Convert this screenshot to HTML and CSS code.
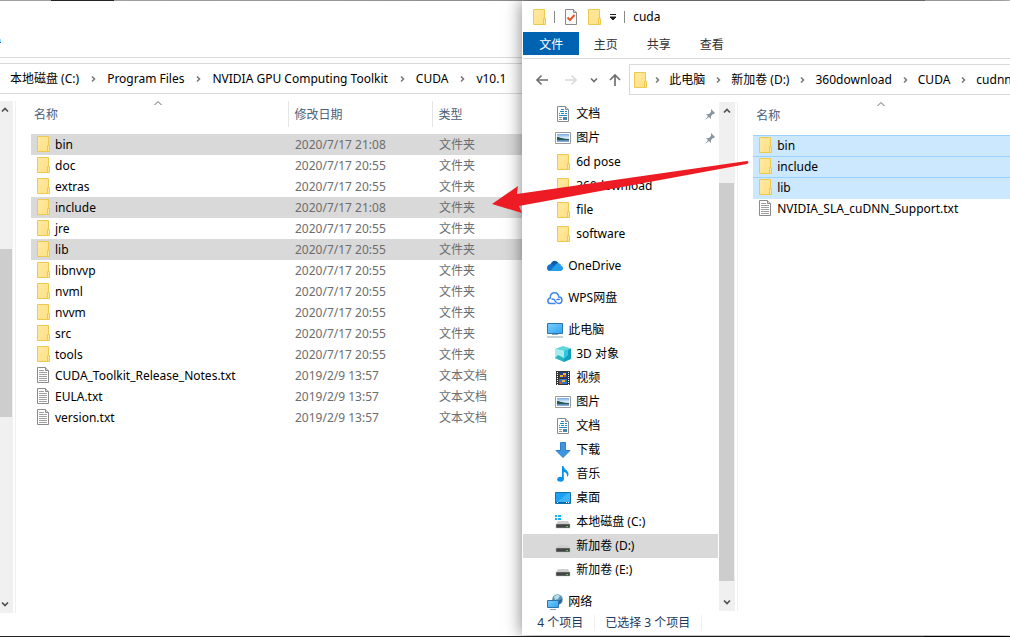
FILE: index.html
```html
<!DOCTYPE html>
<html lang="zh-CN">
<head>
    <meta charset="UTF-8">
    <meta name="viewport" content="width=device-width, initial-scale=1.0">
    <title>cuda</title>
    <link rel="stylesheet" href="styles.css">
</head>
<body>
    <!-- Icônes partagées -->
    <svg class="defs" aria-hidden="true">
        <defs>
            <linearGradient id="gFolder" x1="0" y1="0" x2="1" y2="1">
                <stop offset="0" stop-color="#ffe9a2"/>
                <stop offset="1" stop-color="#ffe084"/>
            </linearGradient>
            <linearGradient id="gScreen" x1="0" y1="0" x2="1" y2="1">
                <stop offset="0" stop-color="#7ccfff"/>
                <stop offset="1" stop-color="#2ea3f2"/>
            </linearGradient>
            <linearGradient id="gPhoto" x1="0" y1="0" x2="0" y2="1">
                <stop offset="0" stop-color="#6fa8e8"/>
                <stop offset="0.5" stop-color="#e4f2fc"/>
                <stop offset="0.8" stop-color="#5b8fc0"/>
                <stop offset="1" stop-color="#8fb8dc"/>
            </linearGradient>
            <symbol id="i-folder" viewBox="0 0 16 16">
                <path d="M2.500.5h11v15h-11z" fill="url(#gFolder)" stroke="#eec94f"/>
                <path d="M12.500 9.500h2v6h-2z" fill="#ffe79b" stroke="#eec94f"/>
            </symbol>
            <symbol id="i-text" viewBox="0 0 16 16">
                <path d="M2.500.5h8l3 3v12h-11z" fill="#fff" stroke="#8a8a8a"/>
                <path d="M10.500.5v3h3" fill="#ddd" stroke="#8a8a8a"/>
                <path d="M4 3.500h5M4 5.500h8M4 7.500h8M4 9.500h8M4 11.500h8M4 13.500h8" stroke="#a0a0a0"/>
            </symbol>
            <symbol id="i-doc" viewBox="0 0 16 16">
                <path d="M2.500.5h8l3 3v12h-11z" fill="#fff" stroke="#8a8a8a"/>
                <path d="M10.500.5v3h3" fill="#ddd" stroke="#8a8a8a"/>
                <path d="M6 3.500h3M5 5.500h4M10 5.500h2M4 7.500h1M6 7.500h3M10 7.500h2M4 9.500h8" stroke="#1e88d2"/>
                <path d="M4 11.500h3M4 13.500h3" stroke="#909090"/>
                <path d="M8 11h4v3H8z" fill="#4c84a6"/>
            </symbol>
            <symbol id="i-pic" viewBox="0 0 16 16">
                <path d="M.5 2.500h15v11H.5z" fill="#fff" stroke="#9a9a9a"/>
                <path d="M2 4h12v8H2z" fill="url(#gPhoto)"/>
                <path d="M2 7c3 0 5 2 12 2v1H2z" fill="#27554f"/>
            </symbol>
            <symbol id="i-onedrive" viewBox="0 0 16 16">
                <path d="M3.500 7C4 3 9 .5 11.600 5.500L8 10z" fill="#0a5cad"/>
                <path d="M0 10C0 7 4 5 6.500 6.800L10 10l-7 3C1 13 0 12 0 10z" fill="#1072cc"/>
                <path d="M8 7.500c1-3 6-3 6 .2 3 .6 2.500 5.300-.5 5.300H3z" fill="#259eea"/>
            </symbol>
            <symbol id="i-wps" viewBox="0 0 16 16">
                <path d="M3.500 13.500C0 13.500 0 8.500 3.300 8 3 1.500 11 1 11.800 7c4.300.2 4.200 6.500-.3 6.500-2.500 0-3-2-4-3.500-.800-1.200-2-1.200-3-.5M8.500 13.500h-5M9.500 10c1-1 2.500-.8 3 .2" fill="none" stroke="#3f86ef" stroke-width="1.500"/>
            </symbol>
            <symbol id="i-pc" viewBox="0 0 16 16">
                <path d="M.5 1.500h15v10H.5z" fill="url(#gScreen)" stroke="#2c75a8"/>
                <path d="M5 12.500h6M0 15h16" stroke="#8fa3b1"/>
            </symbol>
            <symbol id="i-cube" viewBox="0 0 16 16">
                <path d="M0 3l8-3 8 2.500L9 5z" fill="#5fd6de"/>
                <path d="M0 3l9 2v11l-9-4z" fill="#a4ecee"/>
                <path d="M9 5l7-2.500V13l-7 3z" fill="#0f9fc0"/>
                <path d="M9 5l4-1.500V9l-4 4z" fill="#35c4dc"/>
                <path d="M0 12l3-3 6 3v4z" fill="#2bb3c4"/>
            </symbol>
            <symbol id="i-video" viewBox="0 0 16 16">
                <path d="M1 1h14v14H1z" fill="#333"/>
                <path d="M4 2h8v6H4z" fill="#263f8c"/>
                <path d="M4 9h8v5H4z" fill="#3272d0"/>
                <path d="M5 5h3v2H5zM8 3h3v2H8zM7 10h3v2H7z" fill="#f2ba24"/>
                <path d="M9 5h2v2H9zM5 12h2v2H5z" fill="#d8532c"/>
                <path d="M2.500 2v13M13.500 2v13" stroke="#fff" stroke-dasharray="1 1"/>
            </symbol>
            <symbol id="i-down" viewBox="0 0 16 16">
                <path d="M5.500.5h5v8h4.500L8 15.500 1 8.500h4.500z" fill="#3c96e4" stroke="#2d7fc9"/>
            </symbol>
            <symbol id="i-music" viewBox="0 0 16 16">
                <ellipse cx="5.500" cy="13.200" rx="3.300" ry="2.500" fill="#0a93ec"/>
                <path d="M7 0h1.500c.5 3.500 5 4.500 5 8 0 1.500-1 2.500-1.500 3 .5-3-1-4.500-3.200-5.200V13H7z" fill="#0a93ec"/>
            </symbol>
            <symbol id="i-desk" viewBox="0 0 16 16">
                <path d="M.5 2.500h15v11H.5z" fill="#1ba1f4" stroke="#1272ae"/>
                <path d="M1 13L13 3h2v10z" fill="#40b4fb"/>
                <path d="M1 12.500h1M3 12.500h8M12 12.500h1M14 12.500h1" stroke="#0b68ad"/>
                <path d="M2 12.500h1M11 12.500h1M13 12.500h1" stroke="#fff"/>
            </symbol>
            <symbol id="i-drive" viewBox="0 0 16 16">
                <path d="M3 7h10l2 4H1z" fill="#d0d0d0"/>
                <path d="M1 10h14v4H1z" fill="#444" stroke="#bbb" stroke-width="0.500"/>
                <path d="M11 12h2v1h-2z" fill="#35e03d"/>
            </symbol>
            <symbol id="i-sys" viewBox="0 0 16 16">
                <use href="#i-drive"/>
                <path d="M0 1h2v2H0zM3 1h3v2H3zM0 4h2v2H0zM3 4h3v2H3z" fill="#18b0ee"/>
            </symbol>
            <symbol id="i-net" viewBox="0 0 16 16">
                <circle cx="10.500" cy="5.500" r="5.300" fill="#5b93b4"/>
                <path d="M7 3c2-3 5-2 6-1l-2 3-3 1z" fill="#b9dcea"/>
                <path d="M11 7l4-2c0 3-1 4-3 5z" fill="#2e6286"/>
                <path d="M.5 6.500h11v7H.5z" fill="url(#gScreen)" stroke="#2c75a8"/>
                <path d="M3 15.500h6" stroke="#8fa3b1"/>
            </symbol>
            <symbol id="i-pin" viewBox="0 0 16 16">
                <path d="M9 3l4 4-1 1h-1l-2 2v3l-2-2-4 3 3-4-2-2h3l2-2V4z" fill="#8795a1"/>
            </symbol>
            <symbol id="i-check" viewBox="0 0 16 16">
                <path d="M2.500.5h8l3 3v12h-11z" fill="#fafafa" stroke="#8a8a8a"/>
                <path d="M10.500.5v3h3" fill="#ddd" stroke="#8a8a8a"/>
                <path d="M4.500 8.500l2.500 2.500 4.500-5" fill="none" stroke="#e4572a" stroke-width="2"/>
            </symbol>
            <symbol id="i-left" viewBox="0 0 16 16">
                <path d="M14 8H3M7.500 3.500L3 8l4.500 4.500" fill="none" stroke="currentColor" stroke-width="1.700"/>
            </symbol>
            <symbol id="i-right" viewBox="0 0 16 16">
                <path d="M2 8h11M8.500 3.500L13 8l-4.500 4.500" fill="none" stroke="currentColor" stroke-width="1.700"/>
            </symbol>
            <symbol id="i-up" viewBox="0 0 16 16">
                <path d="M8 14V3M3 8l5-5 5 5" fill="none" stroke="currentColor" stroke-width="1.700"/>
            </symbol>
            <symbol id="i-chev" viewBox="0 0 8 8">
                <path d="M1 5.500L4 2.500l3 3" fill="none" stroke="currentColor" stroke-width="1.700"/>
            </symbol>
            <symbol id="i-sep" viewBox="0 0 8 8">
                <path d="M3 1.500L5.500 4 3 6.500" fill="none" stroke="#767676" stroke-width="1.500"/>
            </symbol>
            <symbol id="i-sort" viewBox="0 0 8 8">
                <path d="M.5 6L4 2.500 7.500 6" fill="none" stroke="#666"/>
            </symbol>
        </defs>
    </svg>

    <main class="desktop">
        <section class="window window-back" aria-label="v10.1">
            <div class="ribbon-space"><span class="tab-edge"></span></div>
            <nav class="address">
                <a href="#">本地磁盘 (C:)</a><svg class="sep"><use href="#i-sep"/></svg>
                <a href="#">Program Files</a><svg class="sep"><use href="#i-sep"/></svg>
                <a href="#">NVIDIA GPU Computing Toolkit</a><svg class="sep"><use href="#i-sep"/></svg>
                <a href="#">CUDA</a><svg class="sep"><use href="#i-sep"/></svg>
                <a href="#">v10.1</a>
            </nav>
            <div class="panes">
                <div class="scrollbar">
                    <button aria-label="向上"><svg><use href="#i-chev"/></svg></button>
                    <div class="track"><div class="thumb thumb-back"></div></div>
                    <button class="flip" aria-label="向下"><svg><use href="#i-chev"/></svg></button>
                </div>
                <div class="list">
                    <table class="files">
                        <thead>
                            <tr>
                                <th class="col-name">名称<svg class="sort"><use href="#i-sort"/></svg></th>
                                <th class="col-date">修改日期</th>
                                <th class="col-type">类型</th>
                            </tr>
                        </thead>
                        <tbody>
                            <tr class="marked"><td><svg class="icon"><use href="#i-folder"/></svg>bin</td><td>2020/7/17 21:08</td><td>文件夹</td></tr>
                            <tr><td><svg class="icon"><use href="#i-folder"/></svg>doc</td><td>2020/7/17 20:55</td><td>文件夹</td></tr>
                            <tr><td><svg class="icon"><use href="#i-folder"/></svg>extras</td><td>2020/7/17 20:55</td><td>文件夹</td></tr>
                            <tr class="marked"><td><svg class="icon"><use href="#i-folder"/></svg>include</td><td>2020/7/17 21:08</td><td>文件夹</td></tr>
                            <tr><td><svg class="icon"><use href="#i-folder"/></svg>jre</td><td>2020/7/17 20:55</td><td>文件夹</td></tr>
                            <tr class="marked"><td><svg class="icon"><use href="#i-folder"/></svg>lib</td><td>2020/7/17 20:55</td><td>文件夹</td></tr>
                            <tr><td><svg class="icon"><use href="#i-folder"/></svg>libnvvp</td><td>2020/7/17 20:55</td><td>文件夹</td></tr>
                            <tr><td><svg class="icon"><use href="#i-folder"/></svg>nvml</td><td>2020/7/17 20:55</td><td>文件夹</td></tr>
                            <tr><td><svg class="icon"><use href="#i-folder"/></svg>nvvm</td><td>2020/7/17 20:55</td><td>文件夹</td></tr>
                            <tr><td><svg class="icon"><use href="#i-folder"/></svg>src</td><td>2020/7/17 20:55</td><td>文件夹</td></tr>
                            <tr><td><svg class="icon"><use href="#i-folder"/></svg>tools</td><td>2020/7/17 20:55</td><td>文件夹</td></tr>
                            <tr><td><svg class="icon"><use href="#i-text"/></svg>CUDA_Toolkit_Release_Notes.txt</td><td>2019/2/9 13:57</td><td>文本文档</td></tr>
                            <tr><td><svg class="icon"><use href="#i-text"/></svg>EULA.txt</td><td>2019/2/9 13:57</td><td>文本文档</td></tr>
                            <tr><td><svg class="icon"><use href="#i-text"/></svg>version.txt</td><td>2019/2/9 13:57</td><td>文本文档</td></tr>
                        </tbody>
                    </table>
                </div>
            </div>
        </section>

        <section class="window window-front" aria-label="cuda">
            <header class="titlebar">
                <svg class="icon"><use href="#i-folder"/></svg>
                <span class="bar"></span>
                <button aria-label="属性"><svg class="icon"><use href="#i-check"/></svg></button>
                <button aria-label="新建文件夹"><svg class="icon"><use href="#i-folder"/></svg></button>
                <button class="more" aria-label="自定义"><svg viewBox="0 0 8 8"><path d="M1 1.500h6M1 4h6L4 7z" fill="#222" stroke="#222"/></svg></button>
                <span class="bar"></span>
                <h1>cuda</h1>
            </header>
            <div class="tabs">
                <button class="tab tab-file">文件</button>
                <button class="tab">主页</button>
                <button class="tab">共享</button>
                <button class="tab">查看</button>
            </div>
            <div class="toolbar">
                <div class="history">
                    <button aria-label="后退"><svg class="icon"><use href="#i-left"/></svg></button>
                    <button class="off" aria-label="前进"><svg class="icon"><use href="#i-right"/></svg></button>
                    <button class="flip" aria-label="最近"><svg class="small"><use href="#i-chev"/></svg></button>
                    <button aria-label="上移"><svg class="icon"><use href="#i-up"/></svg></button>
                </div>
                <nav class="address address-box">
                    <svg class="icon"><use href="#i-folder"/></svg><svg class="sep"><use href="#i-sep"/></svg>
                    <a href="#">此电脑</a><svg class="sep"><use href="#i-sep"/></svg>
                    <a href="#">新加卷 (D:)</a><svg class="sep"><use href="#i-sep"/></svg>
                    <a href="#">360download</a><svg class="sep"><use href="#i-sep"/></svg>
                    <a href="#">CUDA</a><svg class="sep"><use href="#i-sep"/></svg>
                    <a href="#">cudnn</a>
                </nav>
            </div>
            <div class="panes">
                <nav class="tree">
                    <ul>
                        <li><a href="#"><svg class="icon"><use href="#i-doc"/></svg>文档<svg class="icon pin"><use href="#i-pin"/></svg></a></li>
                        <li><a href="#"><svg class="icon"><use href="#i-pic"/></svg>图片<svg class="icon pin"><use href="#i-pin"/></svg></a></li>
                        <li><a href="#"><svg class="icon"><use href="#i-folder"/></svg>6d pose</a></li>
                        <li><a href="#"><svg class="icon"><use href="#i-folder"/></svg>360download</a></li>
                        <li><a href="#"><svg class="icon"><use href="#i-folder"/></svg>file</a></li>
                        <li><a href="#"><svg class="icon"><use href="#i-folder"/></svg>software</a></li>
                        <li class="root"><a href="#"><svg class="icon"><use href="#i-onedrive"/></svg>OneDrive</a></li>
                        <li class="root"><a href="#"><svg class="icon"><use href="#i-wps"/></svg>WPS网盘</a></li>
                        <li class="root"><a href="#"><svg class="icon"><use href="#i-pc"/></svg>此电脑</a></li>
                        <li><a href="#"><svg class="icon"><use href="#i-cube"/></svg>3D 对象</a></li>
                        <li><a href="#"><svg class="icon"><use href="#i-video"/></svg>视频</a></li>
                        <li><a href="#"><svg class="icon"><use href="#i-pic"/></svg>图片</a></li>
                        <li><a href="#"><svg class="icon"><use href="#i-doc"/></svg>文档</a></li>
                        <li><a href="#"><svg class="icon"><use href="#i-down"/></svg>下载</a></li>
                        <li><a href="#"><svg class="icon"><use href="#i-music"/></svg>音乐</a></li>
                        <li><a href="#"><svg class="icon"><use href="#i-desk"/></svg>桌面</a></li>
                        <li><a href="#"><svg class="icon"><use href="#i-sys"/></svg>本地磁盘 (C:)</a></li>
                        <li class="current"><a href="#"><svg class="icon"><use href="#i-drive"/></svg>新加卷 (D:)</a></li>
                        <li><a href="#"><svg class="icon"><use href="#i-drive"/></svg>新加卷 (E:)</a></li>
                        <li class="root"><a href="#"><svg class="icon"><use href="#i-net"/></svg>网络</a></li>
                    </ul>
                </nav>
                <div class="scrollbar">
                    <button aria-label="向上"><svg><use href="#i-chev"/></svg></button>
                    <div class="track"><div class="thumb thumb-front"></div></div>
                    <button class="flip" aria-label="向下"><svg><use href="#i-chev"/></svg></button>
                </div>
                <div class="list">
                    <table class="files">
                        <thead>
                            <tr><th class="col-name">名称<svg class="sort"><use href="#i-sort"/></svg></th></tr>
                        </thead>
                        <tbody>
                            <tr class="selected"><td><svg class="icon"><use href="#i-folder"/></svg>bin</td></tr>
                            <tr class="selected"><td><svg class="icon"><use href="#i-folder"/></svg>include</td></tr>
                            <tr class="selected"><td><svg class="icon"><use href="#i-folder"/></svg>lib</td></tr>
                            <tr><td><svg class="icon"><use href="#i-text"/></svg>NVIDIA_SLA_cuDNN_Support.txt</td></tr>
                        </tbody>
                    </table>
                </div>
            </div>
            <footer class="status">
                <span>4 个项目</span>
                <span>已选择 3 个项目</span>
            </footer>
        </section>

        <!-- Flèche rouge au-dessus des deux fenêtres -->
        <svg class="arrow" viewBox="0 0 260 54" aria-hidden="true">
            <path d="M1 43L27 25l-1 8L256 0q3 1 0 3L28 45l3 7z" fill="#ed1c24"/>
        </svg>
    </main>
</body>
</html>
```

FILE: styles.css
```css
* {
    box-sizing: border-box;
}
body {
    margin: 0;
    font-family: "Noto Sans", "Noto Sans CJK SC", sans-serif;
    font-size: 12px;
    line-height: 16px;
    color: #000;
    background-color: #fff;
}
a {
    color: inherit;
    text-decoration: none;
}
button {
    border: 0;
    padding: 0;
    background: none;
    font: inherit;
    color: #707070;
    display: flex;
    align-items: center;
    justify-content: center;
}
.defs {
    position: absolute;
    width: 0;
    height: 0;
}
.icon {
    width: 16px;
    height: 16px;
    flex: none;
}
.flip {
    transform: rotate(180deg);
}

/* Bureau */
.desktop {
    position: relative;
    display: flex;
    min-height: 100vh;
    overflow: hidden;
    padding: 1px 0;
    background:
        linear-gradient(90deg, #a0a0a0 51px, #222 51px, #222 114px, #a0a0a0 114px, #888 60%, #888 925px, #c8c8c8 925px) top / 100% 1px no-repeat,
        linear-gradient(90deg, #222 924px, #000 924px) bottom / 100% 1px no-repeat,
        #fff;
}
.window {
    display: flex;
    flex-direction: column;
    min-width: 0;
    background-color: #fff;
}
.window-back {
    flex: none;
    width: 51.7%;
    padding-bottom: 23px;
}
.window-front {
    flex: 1;
    z-index: 1;
    margin-bottom: 1px;
    padding-left: 1px;
    box-shadow: 0 0 16px rgba(0,0,0,0.5);
}
.panes {
    display: flex;
    flex: 1;
    min-height: 0;
    padding-top: 7px;
}

/* Barre d'adresse */
.ribbon-space {
    height: 57px;
    padding-top: 38px;
    border-bottom: 1px solid #d9d9d9;
}
.tab-edge {
    display: block;
    width: 1px;
    height: 4px;
    background-color: #8fe9ff;
    border-bottom: 1px solid #1e5f9f;
}
.address {
    display: flex;
    align-items: center;
    height: 31px;
    margin-top: 5px;
    padding-left: 10px;
    border-top: 1px solid #d9d9d9;
    border-bottom: 1px solid #d9d9d9;
    white-space: nowrap;
    overflow: hidden;
}
.sep {
    width: 8px;
    height: 8px;
    margin: 0 10px;
    flex: none;
}

/* Défilement */
.scrollbar {
    display: flex;
    flex-direction: column;
    flex: none;
    width: 16px;
    background-color: #f0f0f0;
}
.scrollbar button {
    height: 17px;
    color: #505050;
}
.scrollbar svg {
    width: 8px;
    height: 8px;
}
.window-back .scrollbar {
    width: 13px;
}
.window-back .scrollbar button {
    width: 10px;
}
.track {
    display: flex;
    flex-direction: column;
    flex: 1;
}
.thumb {
    width: calc(100% - 1px);
    background-color: #cdcdcd;
}
.thumb-back {
    margin-top: 131px;
    height: 168px;
}
.thumb-front {
    margin-top: 64px;
    height: 398px;
}

/* Liste de fichiers */
.list {
    flex: 1;
    min-width: 0;
    margin-left: 2px;
    padding-left: 15px;
    border-left: 1px solid #f0f0f0;
    overflow: hidden;
}
.files {
    width: 100%;
    table-layout: fixed;
    border-collapse: collapse;
}
.files th {
    position: relative;
    height: 26px;
    padding: 2px 0 0 6px;
    text-align: left;
    font-weight: normal;
    color: #4c607a;
    border-left: 1px solid #e5e5e5;
}
.files .col-name {
    padding-left: 3px;
    border-left: 0;
}
.window-back .col-name {
    width: 257px;
}
.window-back .col-date {
    width: 144px;
}
.sort {
    position: absolute;
    top: -2px;
    left: calc(50% - 5px);
    width: 8px;
    height: 8px;
}
.files thead::after {
    content: "";
    display: block;
    height: 7px;
}
.files td {
    height: 21px;
    padding: 0 0 0 7px;
    line-height: 20px;
    color: #6d6d6d;
    white-space: nowrap;
}
.files td:first-child {
    padding-left: 4px;
    color: #000;
}
.files .icon {
    margin-right: 4px;
    vertical-align: -3px;
}
.marked td {
    background-color: #d9d9d9;
}
.selected td {
    background-color: #cce8ff;
    border-top: 1px solid #99d1ff;
}

/* Fenêtre cuda */
.titlebar {
    display: flex;
    align-items: center;
    height: 31px;
    padding-left: 8px;
}
.titlebar .bar {
    width: 1px;
    height: 12px;
    margin: 0 8px 0 7px;
    background-color: #888;
}
.titlebar button + button {
    margin-left: 7px;
}
.titlebar .more svg {
    width: 8px;
    height: 8px;
}
.titlebar h1 {
    margin: 0;
    font-size: 12px;
    font-weight: normal;
}
.tabs {
    display: flex;
    height: 27px;
    padding-bottom: 3px;
    border-bottom: 1px solid #d9d9d9;
}
.tab {
    width: 53px;
    padding-top: 2px;
    color: #333;
}
.tab-file {
    width: 56px;
    color: #fff;
    background-color: #0063b1;
}
.toolbar {
    display: flex;
}
.history {
    display: flex;
    align-items: center;
    flex: none;
    width: 106px;
    margin-top: 5px;
    padding-left: 11px;
    gap: 13px;
}
.history .off {
    color: #d9d9d9;
}
.history .flip {
    margin: 0 -4px 0 -2px;
}
.history .small {
    width: 8px;
    height: 8px;
}
.address-box {
    flex: 1;
    min-width: 0;
    padding-left: 2px;
    border-left: 1px solid #d9d9d9;
}
.address-box .sep {
    margin: 0 9px;
}
.address-box .icon + .sep {
    margin: 0 8px 0 5px;
}
.tree {
    flex: none;
    width: 195px;
    margin-right: 1px;
    height: 509px;
    overflow: hidden;
}
.tree ul {
    margin: 0;
    padding: 0;
    list-style: none;
}
.tree a {
    display: flex;
    align-items: center;
    gap: 5px;
    height: 24px;
    padding-left: 32px;
}
.tree .root {
    margin-top: 8px;
}
.tree .root a {
    padding-left: 24px;
}
.tree .current {
    background-color: #d9d9d9;
}
.tree .pin {
    margin-left: auto;
}
.status {
    display: flex;
    align-items: center;
    height: 24px;
    padding-left: 14px;
    color: #1e395b;
}
.status span {
    padding-right: 11px;
    margin-right: 10px;
    border-right: 1px solid #f0f0f0;
}

.arrow {
    position: absolute;
    z-index: 2;
    left: 48.6%;
    top: 161px;
    width: 260px;
    height: 54px;
}
```
